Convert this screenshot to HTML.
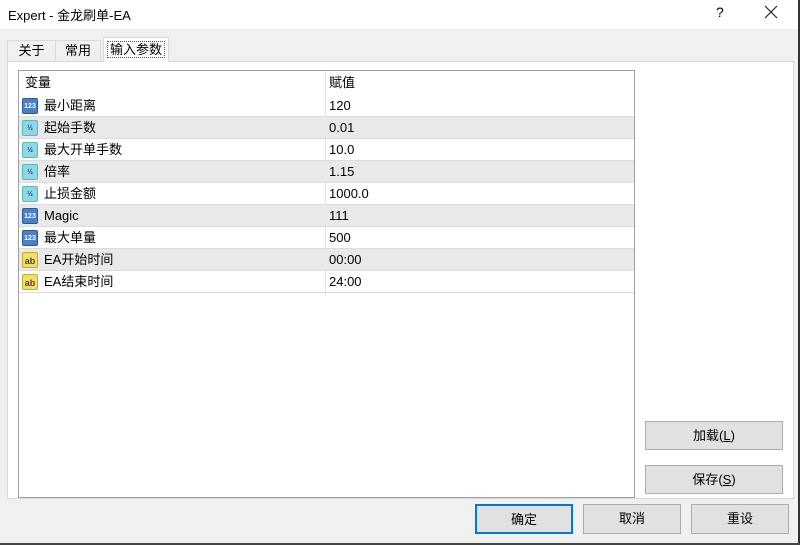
<!DOCTYPE html>
<html><head><meta charset="utf-8"><style>
*{margin:0;padding:0;box-sizing:border-box}
body{width:800px;height:545px;background:#f0f0f0;font-family:"Liberation Sans","Noto Sans CJK SC",sans-serif;font-size:13px;color:#000;position:relative;overflow:hidden}
.abs{position:absolute}
.title{left:0;top:0;width:800px;height:29px;background:#fff}
.tab{position:absolute;border:1px solid #d9d9d9;border-bottom:none;background:#f0f0f0;text-align:center;line-height:20px}
.panel{left:7px;top:61px;width:787px;height:438px;background:#fff;border:1px solid #dadada}
.list{left:18px;top:70px;width:617px;height:428px;border:1px solid #a0a0a0;background:#fff}
.row{position:absolute;left:0;width:615px;height:22px;line-height:22px;border-bottom:1px solid #dcdcdc}
.row.g{background:#e9e9e9}
.row span{position:absolute}
.n{left:25px}.v{left:310px}
.sep{position:absolute;left:306px;top:0;width:1px;height:224px;background:#e3e3e3}
.ic{position:absolute;left:3px;top:3px;width:16px;height:16px;border-radius:2px;font-size:7px;line-height:16px;text-align:center;font-weight:bold}
.i1{background:#4b7fc6;color:#fff;border:1px solid #2b5a9c}
.i2{background:#8fd6e8;color:#246;border:1px solid #5bb}
.i3{background:#f2de6a;color:#543;border:1px solid #c9a92c;font-size:9px}
.btn{position:absolute;background:#e1e1e1;border:1px solid #adadad;text-align:center;line-height:28px}
</style></head><body>
<div class="abs title"></div>
<div class="abs" style="left:8px;top:5px;font-size:13px">Expert - 金龙刷单-EA</div>
<div class="abs" style="left:716px;top:4px;font-size:14px">?</div>
<svg class="abs" style="left:764px;top:5px" width="14" height="14"><path d="M1 1L13 13M13 1L1 13" stroke="#222" stroke-width="1.2"/></svg>
<div class="abs panel"></div>
<div class="tab" style="left:7px;top:40px;width:49px;height:21px">关于</div>
<div class="tab" style="left:55px;top:40px;width:46px;height:21px">常用</div>
<div class="tab" style="left:103px;top:37px;width:66px;height:25px;background:#fff;line-height:24px"><span style="border:1px dotted #555;padding:0 2px">输入参数</span></div>
<div class="abs list">
<div class="sep"></div>
<div class="row" style="top:0;height:24px;line-height:24px;border:none"><span style="left:6px">变量</span><span class="v">赋值</span></div>
<div class="row" style="top:24px"><div class="ic i1">123</div><span class="n">最小距离</span><span class="v">120</span></div>
<div class="row g" style="top:46px"><div class="ic i2">½</div><span class="n">起始手数</span><span class="v">0.01</span></div>
<div class="row" style="top:68px"><div class="ic i2">½</div><span class="n">最大开单手数</span><span class="v">10.0</span></div>
<div class="row g" style="top:90px"><div class="ic i2">½</div><span class="n">倍率</span><span class="v">1.15</span></div>
<div class="row" style="top:112px"><div class="ic i2">½</div><span class="n">止损金额</span><span class="v">1000.0</span></div>
<div class="row g" style="top:134px"><div class="ic i1">123</div><span class="n">Magic</span><span class="v">111</span></div>
<div class="row" style="top:156px"><div class="ic i1">123</div><span class="n">最大单量</span><span class="v">500</span></div>
<div class="row g" style="top:178px"><div class="ic i3">ab</div><span class="n">EA开始时间</span><span class="v">00:00</span></div>
<div class="row" style="top:200px"><div class="ic i3">ab</div><span class="n">EA结束时间</span><span class="v">24:00</span></div>
</div>
<div class="btn" style="left:645px;top:421px;width:138px;height:29px">加载(<u>L</u>)</div>
<div class="btn" style="left:645px;top:465px;width:138px;height:29px">保存(<u>S</u>)</div>
<div class="btn" style="left:475px;top:504px;width:98px;height:30px;border:2px solid #0078d7">确定</div>
<div class="btn" style="left:583px;top:504px;width:98px;height:30px">取消</div>
<div class="btn" style="left:691px;top:504px;width:98px;height:30px">重设</div>
<div class="abs" style="left:798px;top:0;width:2px;height:545px;background:#333"></div>
<div class="abs" style="left:0;top:543px;width:800px;height:2px;background:#444"></div>
</body></html>
